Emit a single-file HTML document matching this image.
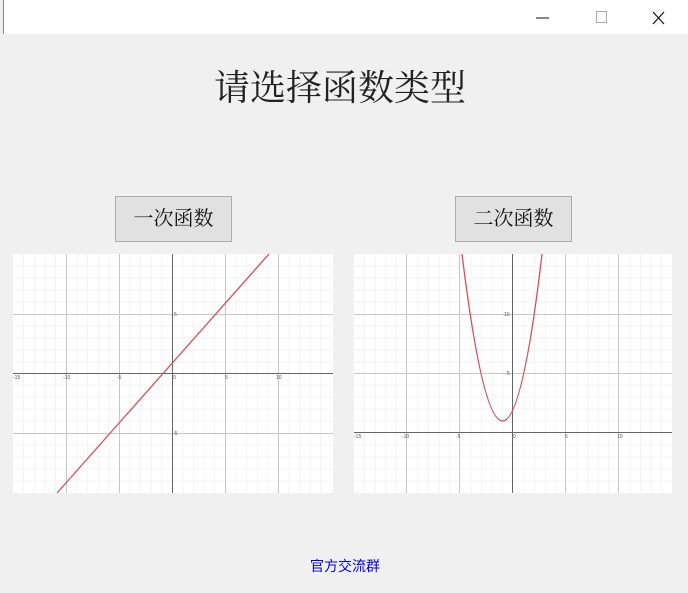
<!DOCTYPE html>
<html><head><meta charset="utf-8"><style>
body{margin:0;width:688px;height:593px;background:#f0f0f0;position:relative;overflow:hidden;font-family:"Liberation Sans","Noto Sans CJK SC",sans-serif}
.tb{position:absolute;left:3px;top:0;width:685px;height:34px;background:#fff;border-left:1px solid #888}
.title{position:absolute;left:190px;width:300px;top:60px;text-align:center;font-family:"Liberation Serif","Noto Serif CJK SC",serif;font-size:36px;color:#222}
.btn{position:absolute;top:196px;width:115px;height:44px;background:#e1e1e1;border:1px solid #adadad;font-family:"Liberation Serif","Noto Serif CJK SC",serif;font-size:20px;line-height:44px;text-align:center;color:#111}
.link{position:absolute;left:300px;width:90px;top:556px;text-align:center;color:#0000ee;font-size:14px}
svg{position:absolute}
</style></head><body>
<div class="tb"></div>
<svg style="left:0;top:0" width="688" height="34">
<line x1="536" y1="18" x2="549" y2="18" stroke="#111" stroke-width="1"/>
<rect x="596.5" y="11.5" width="10" height="11" fill="none" stroke="#aaa"/>
<path d="M653 12L664 24M664 12L653 24" stroke="#111" stroke-width="1.2"/>
</svg>
<div class="title">请选择函数类型</div>
<div class="btn" style="left:115px">一次函数</div>
<div class="btn" style="left:455px">二次函数</div>

<svg style="left:13px;top:254px" width="320" height="239">
<rect width="320" height="239" fill="#fff"/>
<g stroke="#f3f3f3" stroke-width="1">
<path d="M10.6 0V239M21.2 0V239M31.8 0V239M42.4 0V239M64 0V239M74.6 0V239M85.2 0V239M95.8 0V239M117 0V239M127.6 0V239M138.2 0V239M148.8 0V239M170 0V239M180.6 0V239M191.2 0V239M201.8 0V239M223 0V239M233.6 0V239M244.2 0V239M254.8 0V239M276 0V239M286.6 0V239M297.2 0V239M307.8 0V239"/>
<path d="M0 12H320M0 24H320M0 36H320M0 48H320M0 72H320M0 84H320M0 96H320M0 108H320M0 131H320M0 143H320M0 155H320M0 167H320M0 191H320M0 203H320M0 215H320M0 227H320"/>
</g>
<g stroke="#c8c8c8"><path d="M53.5 0V239M106.5 0V239M212.5 0V239M265.5 0V239M0 60.5H320M0 179.5H320"/></g>
<g stroke="#666"><path d="M159.5 0V239M0 119.5H320"/></g>
<line x1="44" y1="239" x2="256" y2="0" stroke="#d05060" stroke-width="1.3"/>
<g font-size="5" fill="#555"><text x="0" y="125">-15</text><text x="50" y="125">-10</text><text x="104" y="125">-5</text><text x="160" y="125">0</text><text x="212" y="125">5</text><text x="263" y="125">10</text><text x="161" y="62">5</text><text x="160" y="181">-5</text></g>
</svg>

<svg style="left:354px;top:254px" width="318" height="239">
<rect width="318" height="239" fill="#fff"/>
<g stroke="#f3f3f3" stroke-width="1">
<path d="M10.6 0V239M21.2 0V239M31.8 0V239M42.4 0V239M64 0V239M74.6 0V239M85.2 0V239M95.8 0V239M117 0V239M127.6 0V239M138.2 0V239M148.8 0V239M170 0V239M180.6 0V239M191.2 0V239M201.8 0V239M223 0V239M233.6 0V239M244.2 0V239M254.8 0V239M276 0V239M286.6 0V239M297.2 0V239M307.8 0V239"/>
<path d="M0 12H318M0 24H318M0 36H318M0 48H318M0 72H318M0 84H318M0 96H318M0 108H318M0 131H318M0 143H318M0 155H318M0 167H318M0 191H318M0 203H318M0 215H318M0 227H318"/>
</g>
<g stroke="#c8c8c8"><path d="M52.5 0V239M105.5 0V239M211.5 0V239M264.5 0V239M0 60.5H318M0 119.5H318"/></g>
<g stroke="#666"><path d="M158.5 0V239M0 178.5H318"/></g>
<path d="M108 0Q149 334 188 0" fill="none" stroke="#d05060" stroke-width="1.3"/>
<g font-size="5" fill="#555"><text x="0" y="184">-15</text><text x="48" y="184">-10</text><text x="102" y="184">-5</text><text x="159" y="184">0</text><text x="211" y="184">5</text><text x="263" y="184">10</text><text x="150" y="62">10</text><text x="153" y="121">5</text></g>
</svg>

<div class="link">官方交流群</div>
</body></html>
